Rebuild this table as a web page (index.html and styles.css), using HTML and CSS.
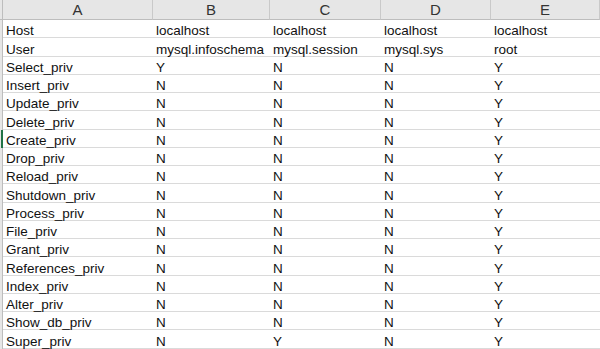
FILE: index.html
```html
<!DOCTYPE html>
<html>
<head>
<meta charset="utf-8">
<link rel="stylesheet" href="styles.css">
</head>
<body>
<div class="sheet">
  <div class="row head">
    <div class="rh"></div><div class="c">A</div><div class="c">B</div><div class="c">C</div><div class="c">D</div><div class="c">E</div>
  </div>
  <div class="row"><div class="rh"></div><div class="c">Host</div><div class="c">localhost</div><div class="c">localhost</div><div class="c">localhost</div><div class="c">localhost</div></div>
  <div class="row"><div class="rh"></div><div class="c">User</div><div class="c">mysql.infoschema</div><div class="c">mysql.session</div><div class="c">mysql.sys</div><div class="c">root</div></div>
  <div class="row"><div class="rh"></div><div class="c">Select_priv</div><div class="c">Y</div><div class="c">N</div><div class="c">N</div><div class="c">Y</div></div>
  <div class="row"><div class="rh"></div><div class="c">Insert_priv</div><div class="c">N</div><div class="c">N</div><div class="c">N</div><div class="c">Y</div></div>
  <div class="row"><div class="rh"></div><div class="c">Update_priv</div><div class="c">N</div><div class="c">N</div><div class="c">N</div><div class="c">Y</div></div>
  <div class="row"><div class="rh"></div><div class="c">Delete_priv</div><div class="c">N</div><div class="c">N</div><div class="c">N</div><div class="c">Y</div></div>
  <div class="row"><div class="rh active"></div><div class="c">Create_priv</div><div class="c">N</div><div class="c">N</div><div class="c">N</div><div class="c">Y</div></div>
  <div class="row"><div class="rh"></div><div class="c">Drop_priv</div><div class="c">N</div><div class="c">N</div><div class="c">N</div><div class="c">Y</div></div>
  <div class="row"><div class="rh"></div><div class="c">Reload_priv</div><div class="c">N</div><div class="c">N</div><div class="c">N</div><div class="c">Y</div></div>
  <div class="row"><div class="rh"></div><div class="c">Shutdown_priv</div><div class="c">N</div><div class="c">N</div><div class="c">N</div><div class="c">Y</div></div>
  <div class="row"><div class="rh"></div><div class="c">Process_priv</div><div class="c">N</div><div class="c">N</div><div class="c">N</div><div class="c">Y</div></div>
  <div class="row"><div class="rh"></div><div class="c">File_priv</div><div class="c">N</div><div class="c">N</div><div class="c">N</div><div class="c">Y</div></div>
  <div class="row"><div class="rh"></div><div class="c">Grant_priv</div><div class="c">N</div><div class="c">N</div><div class="c">N</div><div class="c">Y</div></div>
  <div class="row"><div class="rh"></div><div class="c">References_priv</div><div class="c">N</div><div class="c">N</div><div class="c">N</div><div class="c">Y</div></div>
  <div class="row"><div class="rh"></div><div class="c">Index_priv</div><div class="c">N</div><div class="c">N</div><div class="c">N</div><div class="c">Y</div></div>
  <div class="row"><div class="rh"></div><div class="c">Alter_priv</div><div class="c">N</div><div class="c">N</div><div class="c">N</div><div class="c">Y</div></div>
  <div class="row"><div class="rh"></div><div class="c">Show_db_priv</div><div class="c">N</div><div class="c">N</div><div class="c">N</div><div class="c">Y</div></div>
  <div class="row"><div class="rh"></div><div class="c">Super_priv</div><div class="c">N</div><div class="c">Y</div><div class="c">N</div><div class="c">Y</div></div>
  <div class="row"><div class="rh"></div><div class="c"></div><div class="c"></div><div class="c"></div><div class="c"></div><div class="c"></div></div>
</div>
</body>
</html>
```
FILE: styles.css
```css
html, body {
  margin: 0;
  padding: 0;
  background: #ffffff;
  overflow: hidden;
}
.sheet {
  width: 600px;
  height: 349px;
  overflow: hidden;
  display: flex;
  flex-direction: column;
  font-family: "Liberation Sans", Arial, sans-serif;
  font-size: 13.5px;
  color: #111111;
}
.row {
  display: grid;
  grid-template-columns: 3px 150px 117px 111px 110px 1fr;
  height: 18.25px;
  flex: none;
}
.row .c {
  box-sizing: border-box;
  border-bottom: 1px solid #dadada;
  padding: 0 0 0 3px;
  display: flex;
  align-items: flex-end;
  line-height: 13px;
  white-space: nowrap;
}
.rh {
  box-sizing: border-box;
  background: #e6e6e6;
  border-right: 1px solid #bdbdbd;
}
.rh.active {
  border-right: 2px solid #217346;
}
.row.head {
  height: 20px;
  background: #e6e6e6;
}
.row.head .c {
  border-bottom: 1px solid #bdbdbd;
  border-right: 1px solid #c9c9c9;
  justify-content: center;
  align-items: center;
  padding: 1px 0 0 0;
  line-height: 18px;
  color: #333333;
  font-size: 15px;
}
.row.head .rh {
  border-bottom: 1px solid #bdbdbd;
}
```
